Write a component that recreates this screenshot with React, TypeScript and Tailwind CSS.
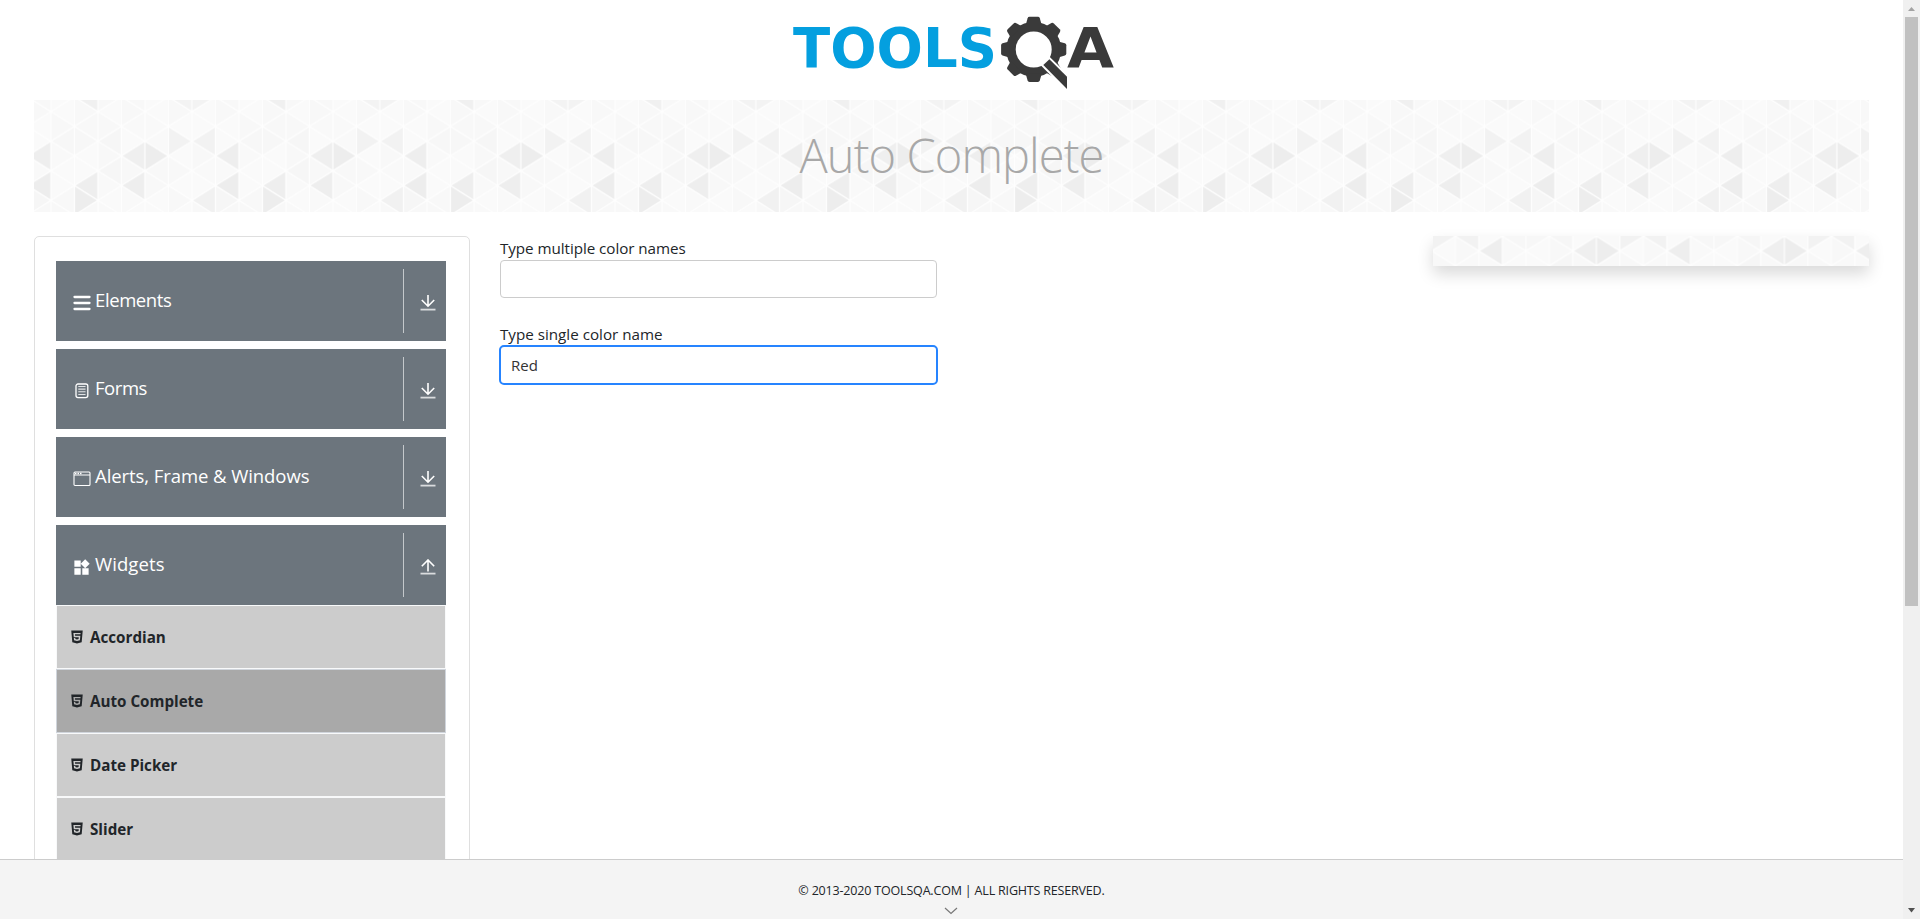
import React from "react";
import { MdWidgets } from "react-icons/md";
import { AiFillHtml5 } from "react-icons/ai";

const COL = 23.5;
const ROW = 14.8;

// Shade of each darker triangle, keyed by "strip,row".
const SHADES: Record<string, string> = {
  "1,0": "#f0f0f0", "5,0": "#f3f3f3", "6,0": "#f3f3f3",
  "5,3": "#f2f2f2", "6,3": "#f2f2f2",
  "7,4": "#eeeeee", "3,4": "#efefef", "4,4": "#ededed",
  "7,6": "#ededed", "3,6": "#eeeeee", "1,6": "#eeeeee",
  "1,7": "#ededed", "6,7": "#f1f1f1",
  "0,3": "#f7f7f7", "1,3": "#f7f7f7", "2,3": "#f6f6f6",
  "2,5": "#f6f6f6", "7,7": "#f6f6f6", "3,7": "#f9f9f9",
};
const LIGHT = ["#f9f9f9", "#f8f8f8", "#fafafa", "#f8f8f8", "#fafafa"];

function Triangles({ id, width, height }: { id: string; width: number; height: number }) {
  const tiles = [];
  for (let k = 0; k < 8; k++) {
    for (let n = -1; n < 10; n++) {
      const right = (k + n) % 2 === 0;
      const y = n * ROW;
      const x0 = k * COL;
      const x1 = x0 + COL;
      const pts = right
        ? `${x0 + 0.6},${y - ROW + 1.2} ${x1 - 1.2},${y} ${x0 + 0.6},${y + ROW - 1.2}`
        : `${x1 - 0.6},${y - ROW + 1.2} ${x0 + 1.2},${y} ${x1 - 0.6},${y + ROW - 1.2}`;
      tiles.push(
        <polygon key={`${k}-${n}`} points={pts} fill={SHADES[`${k},${n}`] ?? LIGHT[(k * 3 + (n + 1) * 7 + ((k * n) % 3) + 5) % 5]} />
      );
    }
  }
  return (
    <svg className="absolute inset-0" width={width} height={height} aria-hidden="true">
      <defs>
        <pattern id={id} width={COL * 8} height={ROW * 9} patternUnits="userSpaceOnUse" x={width / 2 - 148.6} y={height / 2 - 4 * ROW}>
          <rect width="200" height="140" fill="#fefefe" />
          {tiles}
        </pattern>
      </defs>
      <rect width={width} height={height} fill={`url(#${id})`} />
    </svg>
  );
}

function Logo() {
  return (
    <svg className="block h-[100px] w-[350px]" viewBox="780 0 350 100" role="img" aria-label="TOOLSQA">
      <text x="793" y="67" fontFamily="DejaVu Sans" fontWeight="700" fontSize="56" textLength="204" lengthAdjust="spacingAndGlyphs" fill="#049fdf">TOOLS</text>
      <g fill="#3a3a3a">
        <circle cx="1033.7" cy="49.4" r="22.7" fill="none" stroke="#3a3a3a" strokeWidth="9.4" />
        {[0, 45, 90, 135, 180, 225, 270, 315].map((a) => (
          <path key={a} transform={`rotate(${a} 1033.7 49.4)`} d="M1025.7 25 L1027.6 18.2 Q1028 16.8 1029.5 16.8 H1037.9 Q1039.4 16.8 1039.8 18.2 L1041.7 25 Z" />
        ))}
        <path d="M1049.4 59.3 L1067 76.7 V89 L1043.3 65 Z" stroke="#fff" strokeWidth="4" />
        <path d="M1049.4 59.3 L1067 76.7 V89 L1043.3 65 Z" />
      </g>
      <text x="1067" y="67" fontFamily="DejaVu Sans" fontWeight="700" fontSize="56" textLength="47" lengthAdjust="spacingAndGlyphs" fill="#3a3a3a">A</text>
    </svg>
  );
}

const MenuIcon = () => (
  <svg className="h-[18px] w-[18px]" viewBox="0 0 18 18" stroke="#fff" strokeWidth="2.3" strokeLinecap="round">
    <path d="M1.5 3H16.5M1.5 9H16.5M1.5 15H16.5" />
  </svg>
);
const FormIcon = () => (
  <svg className="h-[18px] w-[18px]" viewBox="0 0 18 18" fill="none" stroke="#fff">
    <rect x="3" y="2" width="11.8" height="13.6" rx="2" strokeWidth="1.3" />
    <path d="M5.3 4.5H12.5M5.3 7.1H12.5M5.3 9.7H12.5M5.3 12.5H12.5" strokeWidth="1.1" opacity=".8" />
  </svg>
);
const WindowIcon = () => (
  <svg className="h-[18px] w-[18px]" viewBox="0 0 18 18" fill="none" stroke="#fff">
    <rect x="1" y="2" width="16" height="13.5" rx="1" strokeWidth="1.1" />
    <path d="M1 5H17" strokeWidth="1" />
    <path d="M2 3.5H8.5" strokeWidth="1.6" strokeDasharray="1.5 1" />
  </svg>
);
const WidgetIcon = () => <MdWidgets className="h-[19px] w-[19px]" color="#fff" />;

function Arrow({ up }: { up?: boolean }) {
  return (
    <svg className="mt-1 h-4 w-[16px]" viewBox="0 0 16 16" fill="none" stroke="#fff">
      <path d={up ? "M8 12.5V1.2M1.8 7.2L8 1L14.2 7.2" : "M8 0V11.2M1.8 5L8 11.2L14.2 5"} strokeWidth="1.6" />
      <path d="M.5 14.6H15.5" strokeWidth="1.8" opacity=".75" />
    </svg>
  );
}

const GROUPS = [
  { label: "Elements", Icon: MenuIcon, cls: "tracking-[-0.4px]" },
  { label: "Forms", Icon: FormIcon, cls: "tracking-[-0.45px]" },
  { label: "Alerts, Frame & Windows", Icon: WindowIcon, cls: "tracking-[-0.07px]" },
  { label: "Widgets", Icon: WidgetIcon, cls: "tracking-[0.1px]", open: true },
];
const ITEMS = ["Accordian", "Auto Complete", "Date Picker", "Slider"];

export default function App() {
  return (
    <div className="flex h-[919px] w-[1920px] overflow-hidden bg-white font-['Open_Sans','Noto_Sans',sans-serif] text-[#212529]">
      <div className="flex w-[1903px] flex-col">
        <div className="flex min-h-0 flex-1 flex-col overflow-hidden">
          <header className="flex h-[100px] shrink-0 pl-[780px]"><Logo /></header>
          <div className="relative ml-[34px] h-[112px] w-[1835px] shrink-0">
            <Triangles id="banner" width={1835} height={112} />
            <h1 className="relative pt-[19px] text-center text-[47px] leading-[72px] font-light tracking-[-0.9px] text-[#a8a8a8]">Auto Complete</h1>
          </div>
          <main className="mt-6 ml-[34px] flex w-[1835px] shrink-0 items-start">
            <aside className="w-[436px] shrink-0 rounded-[5px] border border-[#dfdfdf] pt-6 pr-[23px] pb-10 pl-[21px]">
              {GROUPS.map(({ label, Icon, cls, open }) => (
                <div key={label} className={open ? "" : "mb-2"}>
                  <div className="flex h-20 items-center bg-[#6c757d] text-white">
                    <span className="ml-4 flex h-[18px] w-[19px] translate-y-0.5 items-center justify-center"><Icon /></span>
                    <span className={`ml-1 flex-1 pb-0.5 text-[18.5px] ${cls}`}>{label}</span>
                    <span className="h-16 w-px bg-[#c4c8cb]" />
                    <span className="flex w-[42px] justify-center pl-[6px]"><Arrow up={open} /></span>
                  </div>
                </div>
              ))}
              <ul>
                {ITEMS.map((item) => (
                  <li key={item} className={`flex h-16 items-center border pl-3 text-[15.2px] font-bold ${item === "Auto Complete" ? "border-[#d0d5dc] bg-[#a9a9a9]" : "border-[#f8f9fa] bg-[#cccccc]"}`}>
                    <AiFillHtml5 className="h-4 w-4" />
                    <span className="ml-[5px] pt-px">{item}</span>
                  </li>
                ))}
              </ul>
            </aside>
            <section className="ml-[30px] flex w-[437px] flex-col">
              <label className="h-6 text-[15.2px] leading-6 tracking-[-0.05px]">Type multiple color names</label>
              <div className="h-[38px] rounded border border-[#cccccc]" />
              <label className="mt-6 h-6 text-[15.2px] leading-6">Type single color name</label>
              <div className="-mx-px -mt-px flex h-[40px] items-center rounded-[5px] border-2 border-[#2684ff] pl-[10px] text-[15px] text-[#333]">Red</div>
            </section>
            <div className="relative ml-auto h-[30px] w-[436px] shadow-[0_8px_16px_rgba(0,0,0,0.15)]">
              <Triangles id="ad" width={436} height={30} />
            </div>
          </main>
        </div>
        <footer className="flex h-[60px] shrink-0 flex-col items-center border-t border-[#cccccc] bg-[#f4f4f4]">
          <span className="mt-[20px] text-[12.5px] leading-[22px] tracking-[-0.18px]">© 2013-2020 TOOLSQA.COM | ALL RIGHTS RESERVED.</span>
          <svg className="mt-[5px] mr-[2px] h-2 w-[14px]" viewBox="0 0 14 8" fill="none" stroke="#777" strokeWidth="1.2"><path d="M1 1L7 6.5L13 1" /></svg>
        </footer>
      </div>
      <div className="flex w-[17px] flex-col items-center bg-[#f0f0f0]">
        <svg className="h-[17px] w-[17px]" viewBox="0 0 17 17" fill="#a3a3a3"><path d="M8.5 7L12 11H5Z" /></svg>
        <div className="h-[589px] w-[13px] bg-[#c1c1c1]" />
        <svg className="mt-auto h-[17px] w-[17px]" viewBox="0 0 17 17" fill="#505050"><path d="M8.5 10.5L5 6H12Z" /></svg>
      </div>
    </div>
  );
}
